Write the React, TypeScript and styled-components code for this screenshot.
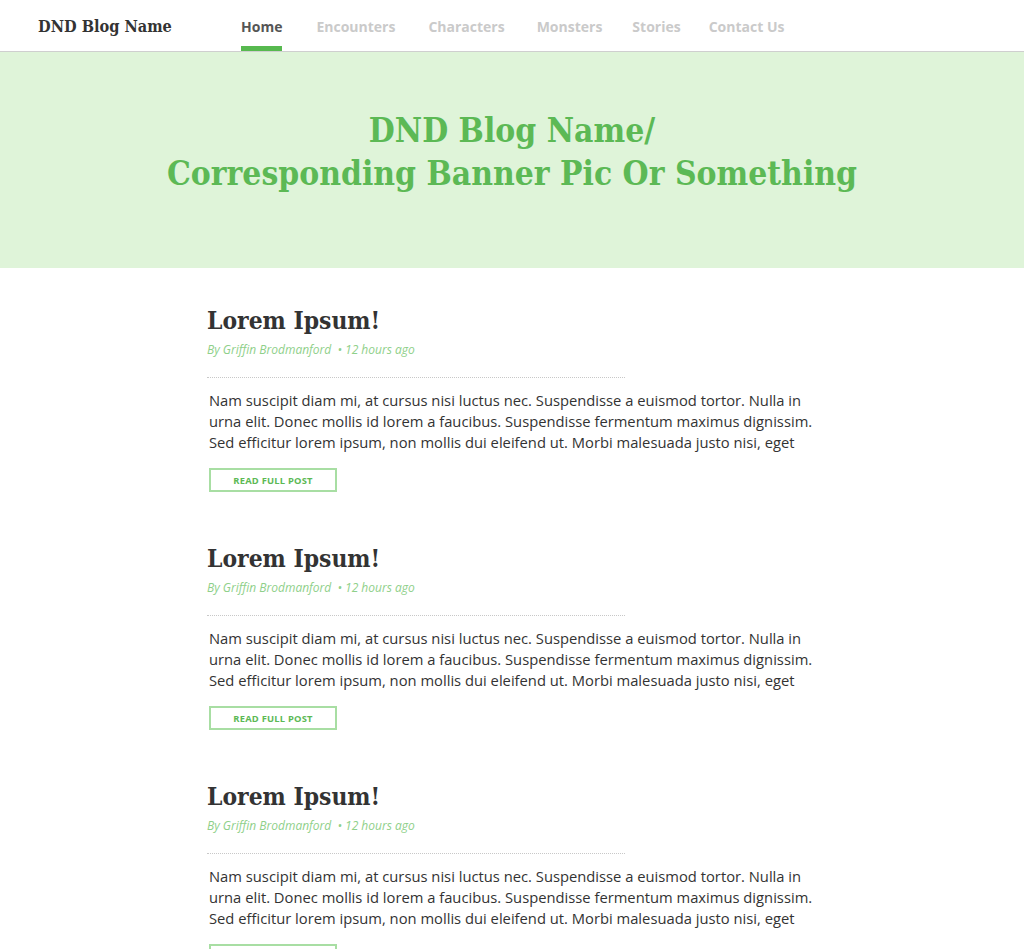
import React from "react";
import styled, { createGlobalStyle } from "styled-components";

const GlobalStyle = createGlobalStyle`
  html, body { margin: 0; padding: 0; background: #fff; }
  body { font-family: "Open Sans", "Liberation Sans", sans-serif; }
  * { box-sizing: border-box; }
`;

const slab = `"DejaVu Serif Condensed", "DejaVu Serif", serif`;

const Header = styled.header`
  height: 52px;
  border-bottom: 1px solid #cfcfcf;
  display: flex;
  align-items: stretch;
  padding-left: 38px;
  background: #fff;
`;

const Logo = styled.div`
  font-family: ${slab};
  font-weight: 700;
  font-size: 16.2px;
  color: #333;
  display: flex;
  align-items: center;
  width: 203px;
  padding-top: 1px;
`;

const Nav = styled.nav`
  display: flex;
`;

const NavItem = styled.a<{ $active?: boolean }>`
  display: flex;
  align-items: center;
  font-family: "Open Sans", sans-serif;
  font-weight: 700;
  font-size: 14px;
  color: ${(p) => (p.$active ? "#555" : "#cacaca")};
  text-decoration: none;
  border-bottom: 5px solid ${(p) => (p.$active ? "#57b94f" : "transparent")};
  padding-top: 6px;
`;

const Banner = styled.section`
  height: 216px;
  background: #dff4d9;
  display: flex;
  justify-content: center;
  padding-top: 57px;
`;

const BannerTitle = styled.h1`
  margin: 0;
  font-family: ${slab};
  font-weight: 700;
  font-size: 33.3px;
  line-height: 43px;
  color: #5cb955;
  text-align: center;
`;

const Main = styled.main`
  padding: 36px 0 40px 207px;
`;

const Post = styled.article`
  margin-bottom: 50px;
`;

const PostTitle = styled.h2`
  margin: 0;
  font-family: ${slab};
  font-weight: 700;
  font-size: 24.4px;
  line-height: 34px;
  color: #333;
`;

const Meta = styled.div`
  margin-top: 3px;
  font-style: italic;
  font-size: 12px;
  line-height: 18px;
  color: #8fd08a;
`;

const Sep = styled.span`
  margin-left: 3px;
`;

const Divider = styled.hr`
  margin: 18px 0 0;
  width: 418px;
  border: 0;
  border-top: 1px dotted #c8c8c8;
  height: 0;
`;

const Body = styled.p`
  margin: 12px 0 0 2px;
  width: 612px;
  font-size: 14.75px;
  line-height: 21px;
  color: #333;
`;

const ReadMore = styled.a`
  margin: 15px 0 0 2px;
  display: flex;
  align-items: center;
  justify-content: center;
  width: 128px;
  height: 24px;
  border: 2px solid #a8dea3;
  font-size: 9.4px;
  font-weight: 700;
  color: #5cb955;
  letter-spacing: 0.2px;
  text-decoration: none;
`;

const text =
  "Nam suscipit diam mi, at cursus nisi luctus nec. Suspendisse a euismod tortor. Nulla in urna elit. Donec mollis id lorem a faucibus. Suspendisse fermentum maximus dignissim. Sed efficitur lorem ipsum, non mollis dui eleifend ut. Morbi malesuada justo nisi, eget";

const navItems = [
  { label: "Home", gap: 0 },
  { label: "Encounters", gap: 34 },
  { label: "Characters", gap: 33 },
  { label: "Monsters", gap: 32 },
  { label: "Stories", gap: 30 },
  { label: "Contact Us", gap: 28 },
];

const NavSlot = styled.div<{ $gap: number }>`
  display: flex;
  margin-left: ${(p) => p.$gap}px;
`;

export default function App() {
  return (
    <>
      <GlobalStyle />
      <Header>
        <Logo>DND Blog Name</Logo>
        <Nav>
          {navItems.map((n, i) => (
            <NavSlot key={n.label} $gap={n.gap}>
              <NavItem $active={i === 0} href="#">
                {n.label}
              </NavItem>
            </NavSlot>
          ))}
        </Nav>
      </Header>
      <Banner>
        <BannerTitle>
          DND Blog Name/
          <br />
          Corresponding Banner Pic Or Something
        </BannerTitle>
      </Banner>
      <Main>
        {[0, 1, 2].map((i) => (
          <Post key={i}>
            <PostTitle>Lorem Ipsum!</PostTitle>
            <Meta>
              By Griffin Brodmanford <Sep>• 12 hours ago</Sep>
            </Meta>
            <Divider />
            <Body>{text}</Body>
            <ReadMore href="#">READ FULL POST</ReadMore>
          </Post>
        ))}
      </Main>
    </>
  );
}
